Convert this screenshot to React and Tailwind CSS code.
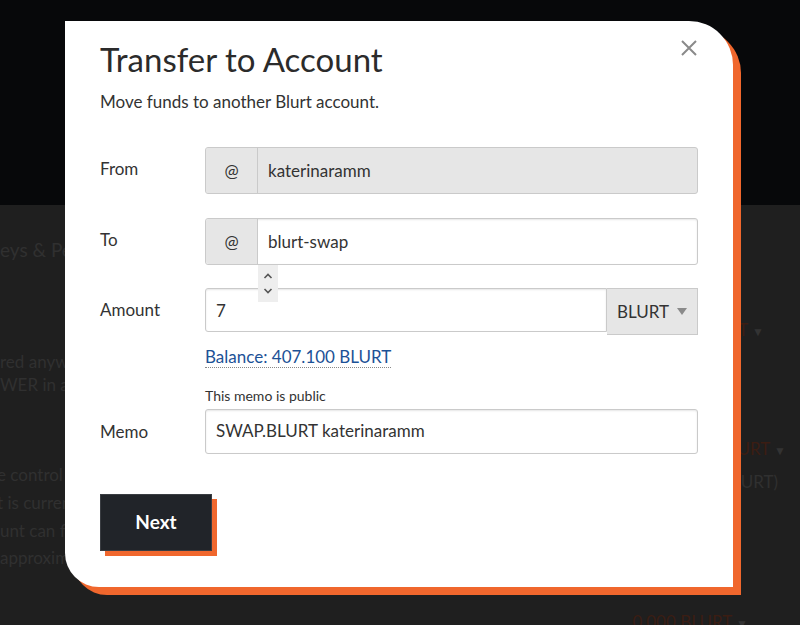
import React from "react";

const font = { fontFamily: "Lato, 'Noto Sans', sans-serif" };

const Addon = () => (
  <div className="flex w-[52px] shrink-0 items-center justify-center border-r border-[#cacaca] bg-[#e6e6e6] text-[17px] text-[#333]">
    @
  </div>
);

const App = () => {
  return (
    <div className="relative h-[625px] w-[800px] overflow-hidden bg-[#1f1f1f]" style={font}>
      {/* Page behind the overlay */}
      <div className="flex h-[205px] justify-center bg-[#07080a] pl-[80px]">
        <div className="-mt-[18px] flex items-center gap-4">
          <div className="h-[46px] w-[46px] rounded-full border-2 border-[#15161a]" />
          <span className="text-[40px] font-bold text-[#111215]">blurt</span>
        </div>
      </div>
      <div className="flex justify-between text-[17px] leading-[24px] text-[#303030]">
        <div className="flex flex-col">
          <div className="mt-[33px] text-[19px]">eys &amp; Permissions</div>
          <div className="mt-[88px]">red anywhere</div>
          <div className="-mt-[1px]">WER in a post</div>
          <div className="mt-[66px] -ml-[3px]">e control over</div>
          <div className="mt-[4px] -ml-[3px]">t is currently</div>
          <div className="mt-[4px]">unt can fluctuate</div>
          <div className="mt-[3px]">approximately</div>
        </div>
        <div className="flex flex-col items-end">
          <div className="mt-[113px] mr-[36px] text-[#3b1d13]">
            BLURT <span className="text-[12px] text-[#333]">▼</span>
          </div>
          <div className="mt-[93px] mr-[14px] text-[#3b1d13]">
            BLURT <span className="text-[12px] text-[#333]">▼</span>
          </div>
          <div className="mt-[7px] mr-[22px]">(0.000 BLURT)</div>
          <div className="mt-[116px] mr-[52px] text-[#3b1d13]">
            0.000 BLURT <span className="text-[12px] text-[#333]">▼</span>
          </div>
        </div>
      </div>

      {/* Modal */}
      <div className="absolute left-[65px] top-[21px] h-[566px] w-[668px] rounded-tr-[44px] rounded-bl-[34px] bg-white px-[35px] pt-[16px] shadow-[8px_8px_0_#f0672d]">
        <button className="absolute right-[35px] top-[18px] text-[#8a8a8a]">
          <svg width="18" height="18" viewBox="0 0 18 18" stroke="currentColor" strokeWidth="2">
            <path d="M2 2l14 14M16 2L2 16" />
          </svg>
        </button>

        <h1 className="text-[33px] leading-[44px] text-[#2b2b2b]">Transfer to Account</h1>
        <p className="mt-[9px] text-[17px] leading-[24px] text-[#333]">
          Move funds to another Blurt account.
        </p>

        <div className="mt-[33px] grid grid-cols-[105px_493px] text-[17px] text-[#333]">
          {/* From */}
          <div className="pt-[9px]">From</div>
          <div className="flex h-[47px] overflow-hidden rounded-[3px] border border-[#cacaca] bg-[#e6e6e6]">
            <Addon />
            <div className="flex items-center px-[10px]">katerinaramm</div>
          </div>

          {/* To */}
          <div className="mt-[24px] pt-[9px]">To</div>
          <div className="relative mt-[24px] flex h-[47px] rounded-[3px] border border-[#cacaca] bg-white shadow-[inset_0_1px_2px_rgba(10,10,10,0.1)]">
            <div className="flex w-[52px] shrink-0 items-center justify-center rounded-l-[3px] border-r border-[#cacaca] bg-[#e6e6e6]">
              @
            </div>
            <div className="flex items-center px-[10px]">blurt-swap</div>
            <div className="absolute left-[52px] top-[46px] z-10 flex h-[37px] w-[20px] flex-col items-center justify-center bg-[#eeeeee] text-[#555]">
              <svg width="10" height="8" viewBox="0 0 10 8" fill="none" stroke="currentColor" strokeWidth="1.6">
                <path d="M1.5 6L5 2.5 8.5 6" />
              </svg>
              <svg className="mt-[7px]" width="10" height="8" viewBox="0 0 10 8" fill="none" stroke="currentColor" strokeWidth="1.6">
                <path d="M1.5 2L5 5.5 8.5 2" />
              </svg>
            </div>
          </div>

          {/* Amount */}
          <div className="mt-[23px] pt-[9px]">Amount</div>
          <div className="mt-[23px] flex">
            <div className="flex h-[44px] flex-1 items-center rounded-l-[3px] border border-[#cacaca] px-[10px] pt-[2px] shadow-[inset_0_1px_2px_rgba(10,10,10,0.1)]">
              7
            </div>
            <div className="flex h-[47px] w-[91px] items-center justify-between border border-l-0 border-[#cacaca] bg-[#e6e6e6] pl-[10px] pr-[10px]">
              <span>BLURT</span>
              <svg width="10" height="7" viewBox="0 0 10 7" fill="#8a8a8a">
                <path d="M0 0h10L5 7z" />
              </svg>
            </div>
          </div>

          {/* Balance */}
          <div />
          <div className="mt-[9px]">
            <span className="border-b border-dotted border-[#888] text-[#1c5196]">
              Balance: 407.100 BLURT
            </span>
          </div>

          {/* Memo */}
          <div />
          <div className="mt-[16px] text-[14px] leading-[20px]">This memo is public</div>
          <div className="pt-[13px]">Memo</div>
          <div className="mt-[3px] flex h-[45px] items-center rounded-[3px] border border-[#cacaca] px-[10px] shadow-[inset_0_1px_2px_rgba(10,10,10,0.1)]">
            SWAP.BLURT katerinaramm
          </div>
        </div>

        <button className="mt-[40px] h-[57px] w-[112px] border border-[#3a3d42] bg-[#212429] text-[19px] font-bold text-white shadow-[5px_5px_0_#f0672d]">
          Next
        </button>
      </div>
    </div>
  );
};

export default App;
